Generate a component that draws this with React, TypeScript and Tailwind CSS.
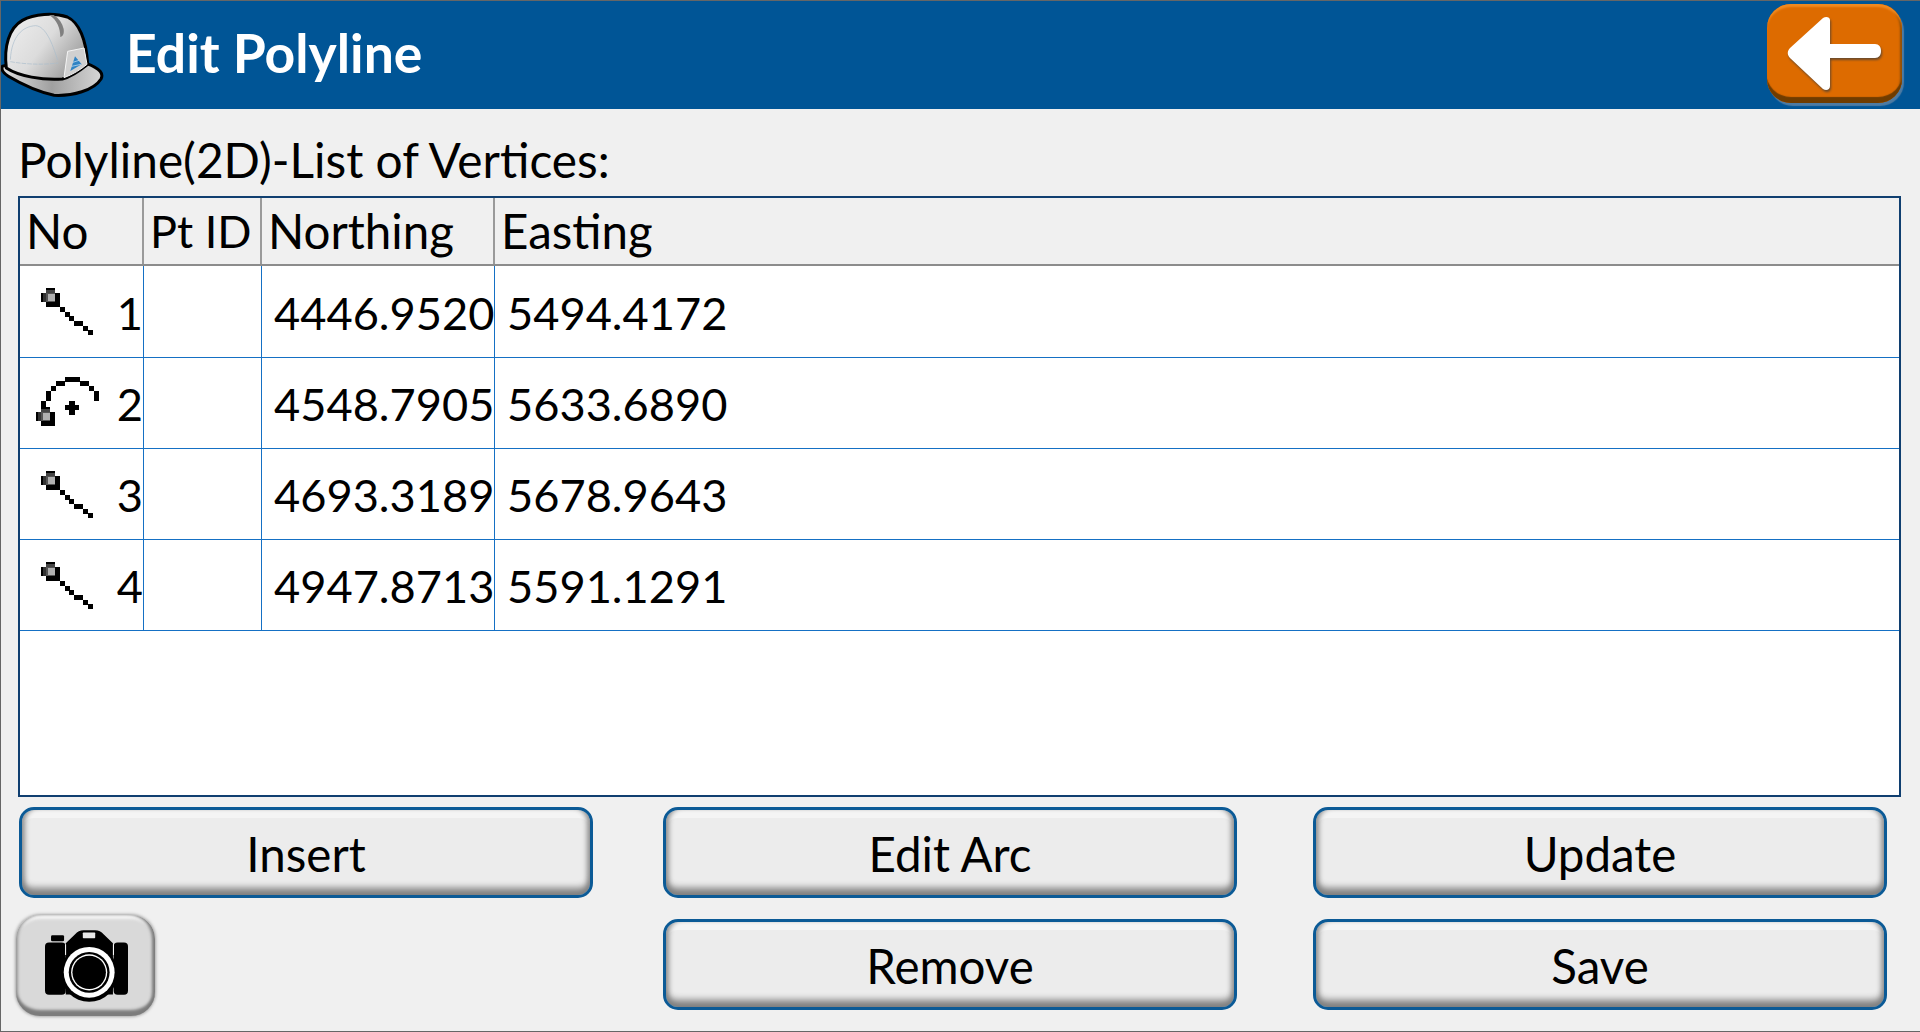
import React from "react";

const font = { fontFamily: '"Lato", "Open Sans", sans-serif' };

const rows = [
  { no: 1, arc: false, north: "4446.9520", east: "5494.4172" },
  { no: 2, arc: true, north: "4548.7905", east: "5633.6890" },
  { no: 3, arc: false, north: "4693.3189", east: "5678.9643" },
  { no: 4, arc: false, north: "4947.8713", east: "5591.1291" },
];

// ball drawn out of chunky pixels, the original icon is a scaled up bitmap
const Ball = ({ x, y }: { x: number; y: number }) => (
  <g transform={`translate(${x} ${y})`} shapeRendering="crispEdges">
    <rect x="4.7" y="0" width="9.4" height="18.8" fill="#000" />
    <rect x="0" y="4.7" width="18.8" height="9.4" fill="#000" />
    <rect x="14" y="14" width="4.8" height="4.8" fill="#000" />
    <rect x="4.7" y="4.7" width="9.4" height="9.4" fill="#555" />
    <rect x="4.7" y="2" width="9.4" height="3" fill="#444" />
    <rect x="2" y="4.7" width="3" height="9.4" fill="#333" />
    <rect x="6.5" y="5.5" width="7" height="7" fill="#b0b0b0" />
  </g>
);

const LineIcon = () => (
  <svg width="70" height="70" viewBox="0 0 70 70" className="mt-[9px] shrink-0">
    <Ball x={9} y={7} />
    <g fill="#000" shapeRendering="crispEdges">
      <rect x="28" y="26" width="5" height="5" />
      <rect x="33" y="31" width="5" height="5" />
      <rect x="37" y="35" width="5" height="5" />
      <rect x="42" y="40" width="9" height="5" />
      <rect x="51" y="45" width="5" height="5" />
      <rect x="56" y="49" width="5" height="5" />
    </g>
  </svg>
);

const ArcIcon = () => (
  <svg width="70" height="70" viewBox="0 0 70 70" className="mt-[9px] shrink-0">
    <g fill="#000" shapeRendering="crispEdges">
      <rect x="9" y="28" width="5" height="9" />
      <rect x="14" y="18" width="5" height="10" />
      <rect x="19" y="13" width="5" height="5" />
      <rect x="24" y="8" width="9" height="5" />
      <rect x="33" y="4" width="15" height="5" />
      <rect x="48" y="8" width="9" height="5" />
      <rect x="57" y="13" width="5" height="5" />
      <rect x="62" y="18" width="5" height="10" />
      <rect x="33" y="32" width="14" height="5" />
      <rect x="37" y="28" width="6" height="14" />
    </g>
    <Ball x={4} y={34} />
  </svg>
);

const HardHat = () => (
  <svg width="108" height="100" viewBox="0 0 324 294" className="-mt-[6px] -ml-[2px] shrink-0">
    <defs>
      <linearGradient id="dome" x1="0" y1="0" x2="1" y2="0.6">
        <stop offset="0" stopColor="#f0f0f0" />
        <stop offset="0.55" stopColor="#dcdcdc" />
        <stop offset="1" stopColor="#9c9c9c" />
      </linearGradient>
      <linearGradient id="brim" x1="0" y1="0" x2="1" y2="0">
        <stop offset="0" stopColor="#e0e0e0" />
        <stop offset="0.5" stopColor="#a0a0a0" />
        <stop offset="1" stopColor="#d6d6d6" />
      </linearGradient>
    </defs>
    <path
      d="M10 190 C6 200 12 210 28 220 C70 245 110 265 165 277 C220 280 285 262 306 228 C314 212 305 198 264 182 L100 170 Z"
      fill="url(#brim)"
      stroke="#000"
      strokeWidth="9"
      strokeLinejoin="round"
    />
    <path
      d="M22 195 C14 130 30 75 70 52 C105 32 165 28 205 42 C240 58 262 110 266 184 C240 205 215 222 190 228 C130 232 60 220 22 195 Z"
      fill="url(#dome)"
      stroke="#000"
      strokeWidth="9"
      strokeLinejoin="round"
    />
    <path d="M150 36 C175 50 184 78 184 102 C192 100 196 92 194 78 C190 60 180 46 164 36 Z" fill="#808080" />
    <path d="M34 170 C38 100 70 70 110 68 C140 70 160 120 176 172" fill="none" stroke="#a9bccb" strokeWidth="2" />
    <path d="M34 176 C80 184 130 186 178 180" fill="none" stroke="#a9bccb" strokeWidth="2" strokeDasharray="14 3" />
    <path d="M206 145 L255 135 L264 184 C245 200 220 215 195 224 Z" fill="#d0d0d0" stroke="#f5f5f5" strokeWidth="3" />
    <path d="M228 160 L248 184 L214 204 Z" fill="#2f83c4" />
    <path d="M222 178 L240 172 M218 190 L246 184" stroke="#d8e8f4" strokeWidth="2" />
  </svg>
);

const BackArrow = () => (
  <svg width="96" height="76" viewBox="0 0 96 76" className="drop-shadow-[1px_2px_1px_#6b4a2a]">
    <path
      d="M43 4 L43 28 L88 28 C92 28 94 31 94 35 C94 39 92 42 88 42 L43 42 L43 70 C43 74 39 75 36 73 L3 42 C0 39 0 35 3 32 L36 2 C39 0 43 1 43 4 Z"
      fill="#fff"
    />
  </svg>
);

const Camera = () => (
  <svg width="83" height="72" viewBox="135 448 248 214" className="ml-[2px]">
    <rect x="153" y="463" width="39" height="18" rx="4" fill="#000" />
    <path d="M197 487 L225 460 Q235 448 250 448 L285 448 Q300 448 310 460 L338 487 L338 640 L197 640 Z" fill="#000" />
    <rect x="135" y="485" width="62" height="156" rx="12" fill="#000" />
    <rect x="340" y="485" width="43" height="156" rx="12" fill="#000" />
    <rect x="338" y="490" width="3" height="32" fill="#fff" />
    <rect x="195" y="490" width="3" height="32" fill="#fff" />
    <rect x="248" y="455" width="37" height="17" rx="2" fill="#e8e8e8" />
    <circle cx="267" cy="577" r="85" fill="#000" />
    <circle cx="267" cy="574" r="76" fill="#fff" />
    <circle cx="267" cy="574" r="61" fill="#000" />
    <circle cx="267" cy="574" r="54" fill="#fff" />
    <circle cx="267" cy="574" r="50" fill="#000" />
  </svg>
);

const ActionButton = ({ label }: { label: string }) => (
  <button className="flex h-[91px] w-[574px] items-center justify-center rounded-[15px] border-[3px] border-[#0b5a96] bg-[#ececec] pt-[2px] text-[47.5px] leading-none text-black shadow-[inset_0_-12px_7px_-5px_#808080,inset_6px_0_5px_-3px_#909090,inset_-6px_0_5px_-3px_#909090,inset_0_9px_0_-1px_#f4f4f4]">
    {label}
  </button>
);

export default function App() {
  return (
    <div
      className="flex h-[1032px] w-[1920px] flex-col overflow-hidden border border-r-0 border-[#666] bg-[#f0f0f0] text-black"
      style={font}
    >
      <div className="flex h-[108px] shrink-0 items-center justify-between bg-[#005596] pr-[18px]">
        <div className="flex items-center gap-[19px]">
          <HardHat />
          <div className="-mt-[4px] text-[53.5px] font-bold leading-none text-white">Edit Polyline</div>
        </div>
        <div className="-mt-[3px] flex h-[99px] w-[135px] items-center justify-center rounded-[24px] bg-[#dd6b00] shadow-[inset_0_-7px_1px_-1px_#6f3c00,inset_0_4px_2px_-1px_#f08a20,inset_-3px_0_2px_-1px_#8a4d08,2px_3px_1px_0_#4d7ba3]">
          <BackArrow />
        </div>
      </div>

      <div className="flex h-[87px] shrink-0 items-center pl-[17px] pt-[15px] text-[47.8px] leading-none">
        Polyline(2D)-List of Vertices:
      </div>

      <div className="ml-[17px] flex h-[601px] w-[1883px] shrink-0 flex-col border-2 border-[#103f70] bg-white text-[45.2px] leading-none">
        <div className="flex h-[68px] shrink-0 items-center border-b-2 border-[#8c8c8c] bg-[#f0f0f0] text-[47.5px]">
          <div className="flex h-full w-[124px] items-center border-r-2 border-[#9a9a9a] pl-[6px]">No</div>
          <div className="flex h-full w-[118px] items-center border-r-2 border-[#9a9a9a] pl-[6px] text-[45px]">Pt ID</div>
          <div className="flex h-full w-[233px] items-center border-r-2 border-[#9a9a9a] pl-[6px]">Northing</div>
          <div className="flex h-full flex-1 items-center pl-[6px]">Easting</div>
        </div>
        {rows.map((row) => (
          <div
            key={row.no}
            className={row.no === 1 ? "flex h-[92px] shrink-0 border-b border-[#1570c4]" : "flex h-[91px] shrink-0 border-b border-[#1570c4]"}
          >
            <div className="flex w-[124px] items-center justify-between border-r border-[#1570c4] pl-[12px]">
              {row.arc ? <ArcIcon /> : <LineIcon />}
              <span className="pt-[2px]">{row.no}</span>
            </div>
            <div className="w-[118px] border-r border-[#1570c4]" />
            <div className="flex w-[233px] items-center border-r border-[#1570c4] pl-[12px] pt-[2px]">{row.north}</div>
            <div className="flex flex-1 items-center pl-[12px] pt-[2px]">{row.east}</div>
          </div>
        ))}
      </div>

      <div className="ml-[18px] mt-[10px] flex">
        <div className="flex w-[574px] flex-col">
          <ActionButton label="Insert" />
          <button className="-ml-[3px] mt-[17px] flex h-[101px] w-[139px] items-center justify-center rounded-[24px] bg-[#d9d9d9] shadow-[inset_0_-8px_3px_-2px_#7c7c7c,inset_-4px_0_3px_-1px_#7c7c7c,inset_3px_0_3px_-1px_#9a9a9a,inset_0_5px_3px_-1px_#f4f4f4,0_0_3px_1px_#a8a8a8]">
            <Camera />
          </button>
        </div>
        <div className="ml-[70px] flex flex-col gap-[21px]">
          <ActionButton label="Edit Arc" />
          <ActionButton label="Remove" />
        </div>
        <div className="ml-[76px] flex flex-col gap-[21px]">
          <ActionButton label="Update" />
          <ActionButton label="Save" />
        </div>
      </div>
    </div>
  );
}
